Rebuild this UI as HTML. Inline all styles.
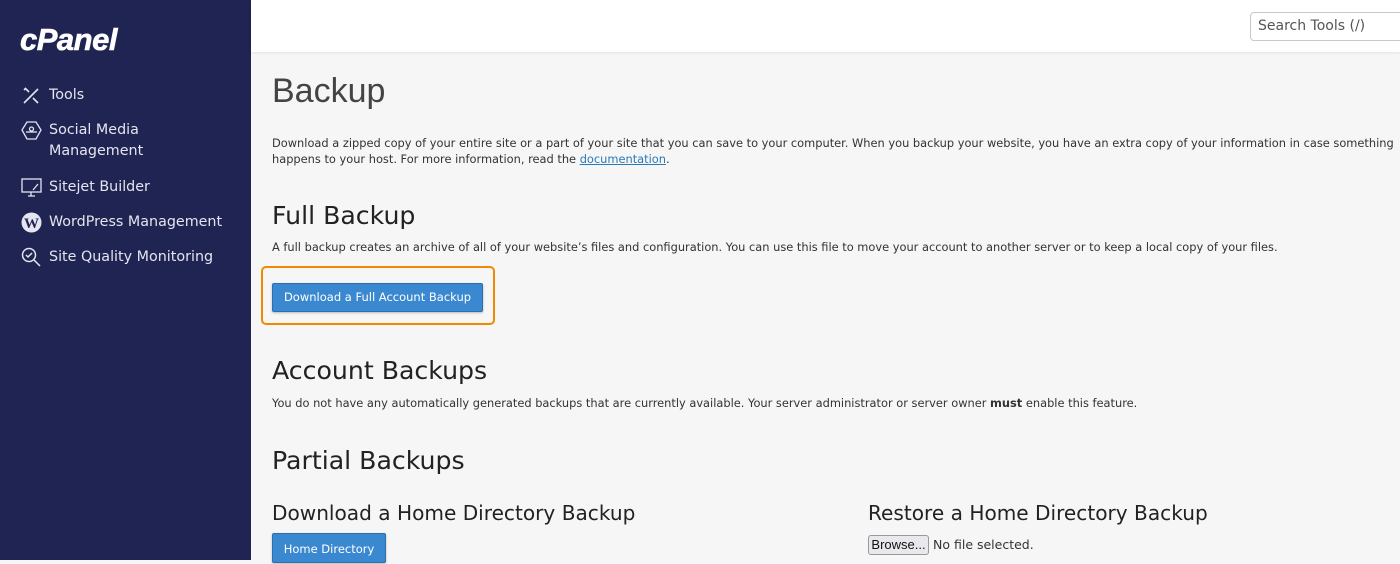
<!DOCTYPE html>
<html><head><style>
*{margin:0;padding:0;box-sizing:border-box}
html,body{background:#f6f6f6}
body{width:1400px;height:560px;overflow:hidden;font-family:"DejaVu Sans","Liberation Sans",sans-serif;color:#333;position:relative}
.sb{position:absolute;left:0;top:0;width:251px;height:560px;background:#1f2453;color:#e6e7ee}
.logo{position:absolute;left:20px;top:22px;font:italic 900 31px "Liberation Sans",sans-serif;color:#fff;letter-spacing:-0.5px;-webkit-text-stroke:0.6px #fff}
.nav{position:absolute;left:49px;font-size:14.3px;line-height:21px;color:#e4e5ee}
.ic{position:absolute;left:21px;width:21px;height:21px}
.hdr{position:absolute;left:251px;top:0;right:0;height:52px;background:#fff;box-shadow:0 1px 3px rgba(0,0,0,.08)}
.search{position:absolute;left:1250px;top:12px;width:160px;height:29px;border:1px solid #c8c8d0;border-radius:4px;background:#fff;font-size:14px;color:#555;padding:5px 7px}
.t{position:absolute;left:272px;white-space:nowrap}
h1{font-weight:400;font-size:34px;color:#444;font-family:"Liberation Sans",sans-serif}
h2{font-weight:400;font-size:25.2px;color:#222}
h3{font-weight:400;font-size:20.1px;color:#222}
p{font-size:11.4px;line-height:16px;color:#333}
a{color:#2a7ab8;text-decoration:underline}
.btn{position:absolute;background:#3a88d0;color:#fff;font-size:11.5px;border:1px solid #2a6fae;border-radius:2px;box-shadow:0 1px 2px rgba(0,0,0,.25)}
</style></head><body>
<div class="sb">
<div class="logo">cPanel</div>
<svg class="ic" style="top:85px" viewBox="0 0 21 21" fill="none" stroke="#e4e5ee" stroke-width="1.6"><path d="M3 18L17 4M4 3l4 4M12 13l5 5M3 5l2-2"/></svg>
<div class="nav" style="top:85px">Tools</div>
<svg class="ic" style="top:120px" viewBox="0 0 21 21" fill="none" stroke="#e4e5ee" stroke-width="1.3"><path d="M6 2h9l5 8-5 9H6l-5-9z"/><circle cx="10.5" cy="9" r="2"/><path d="M5 12h11"/></svg>
<div class="nav" style="top:120px">Social Media<br>Management</div>
<svg class="ic" style="top:177px" viewBox="0 0 21 21" fill="none" stroke="#e4e5ee" stroke-width="1.3"><rect x="1" y="2" width="19" height="13"/><path d="M7 19h7M10 15v4M12 13l5-6"/></svg>
<div class="nav" style="top:177px">Sitejet Builder</div>
<svg class="ic" style="top:212px" viewBox="0 0 21 21"><circle cx="10.5" cy="10.5" r="10" fill="#e4e5ee"/><text x="10.5" y="16" font-size="15" font-weight="bold" text-anchor="middle" fill="#1f2453" font-family="Liberation Serif">W</text></svg>
<div class="nav" style="top:212px">WordPress Management</div>
<svg class="ic" style="top:247px" viewBox="0 0 21 21" fill="none" stroke="#e4e5ee" stroke-width="1.5"><circle cx="8" cy="8" r="6.5"/><path d="M5 8l2 2 4-4M13 13l6 6"/></svg>
<div class="nav" style="top:247px">Site Quality Monitoring</div>
</div>
<div class="hdr"></div>
<div class="search">Search Tools (/)</div>
<h1 class="t" style="top:72px">Backup</h1>
<p class="t" style="top:135px">Download a zipped copy of your entire site or a part of your site that you can save to your computer. When you backup your website, you have an extra copy of your information in case something<br>happens to your host. For more information, read the <a>documentation</a>.</p>
<h2 class="t" style="top:201px">Full Backup</h2>
<p class="t" style="top:239px">A full backup creates an archive of all of your website’s files and configuration. You can use this file to move your account to another server or to keep a local copy of your files.</p>
<div style="position:absolute;left:261px;top:266px;width:234px;height:59px;border:2px solid #f08a00;border-radius:5px"></div>
<div class="btn" style="left:272px;top:283px;width:211px;height:29px;line-height:27px;text-align:center">Download a Full Account Backup</div>
<h2 class="t" style="top:356px">Account Backups</h2>
<p class="t" style="top:395px">You do not have any automatically generated backups that are currently available. Your server administrator or server owner <b>must</b> enable this feature.</p>
<h2 class="t" style="top:446px">Partial Backups</h2>
<h3 class="t" style="top:501px">Download a Home Directory Backup</h3>
<h3 class="t" style="top:501px;left:868px">Restore a Home Directory Backup</h3>
<div class="btn" style="left:272px;top:533px;width:114px;height:30px;line-height:30px;text-align:center">Home Directory</div>
<div style="position:absolute;left:868px;top:535px;width:61px;height:20px;border:1px solid #999;border-radius:3px;background:#e9e9ed;font:13px 'Liberation Sans',sans-serif;line-height:18px;text-align:center;color:#111">Browse...</div>
<p class="t" style="left:933px;top:537px;font-size:12.5px">No file selected.</p>
</body></html>
